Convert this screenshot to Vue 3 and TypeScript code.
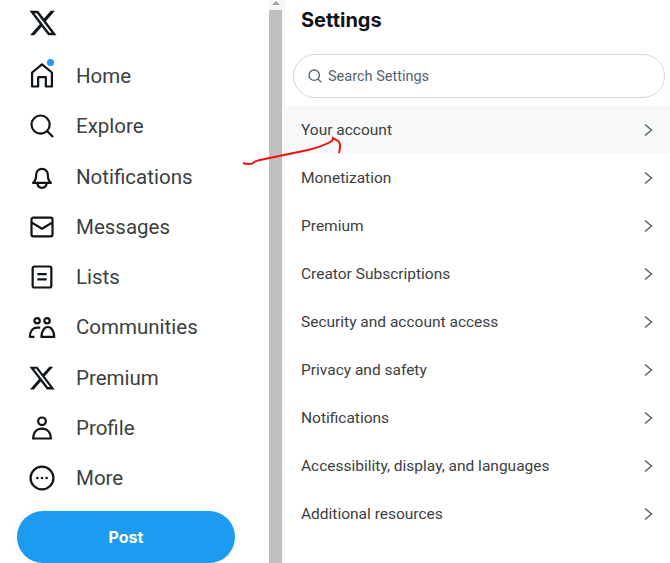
<script setup lang="ts">
interface NavItem {
  label: string
  icon: string
}

const navItems: NavItem[] = [
  { label: 'Home', icon: 'M12 2 3.500 9v12h5.200v-8h6.600v8h5.200V9z' },
  { label: 'Explore', icon: 'M10.800 3a7.800 7.800 0 1 0 0 15.600 7.800 7.800 0 0 0 0-15.600zM16.400 16.400 21.500 21.500' },
  { label: 'Notifications', icon: 'M4.300 17c1.800-1.300 2.700-3 2.700-7a5 5 0 0 1 10 0c0 4 .9 5.700 2.700 7zM8 17.500c.3 2.500 2 3.800 4 3.800s3.700-1.300 4-3.800' },
  { label: 'Messages', icon: 'M4.500 4h15A1.500 1.500 0 0 1 21 5.500v13a1.500 1.500 0 0 1-1.500 1.500h-15A1.500 1.500 0 0 1 3 18.500v-13A1.500 1.500 0 0 1 4.500 4zM3 8l9 5.500L21 8' },
  { label: 'Lists', icon: 'M5.500 3h13A1.500 1.500 0 0 1 20 4.500v15a1.500 1.500 0 0 1-1.500 1.500h-13A1.500 1.500 0 0 1 4 19.500v-15A1.500 1.500 0 0 1 5.500 3zM8 9.500h8M8 14h8' },
  { label: 'Communities', icon: 'M7.800 4.300a2.300 2.300 0 1 0 0 4.600 2.300 2.300 0 0 0 0-4.600zM16.300 4.300a2.300 2.300 0 1 0 0 4.600 2.300 2.300 0 0 0 0-4.600zM1.500 21c0-5 2.500-8.500 6.500-8.500h2.500M1.500 20.500h4M11.500 20.500c0-5 2.500-8.500 5.500-8.500s5.500 3.500 5.500 8.500z' },
  { label: 'Premium', icon: 'x' },
  { label: 'Profile', icon: 'M12 3a3.300 3.300 0 1 0 0 6.600A3.300 3.300 0 0 0 12 3zM4.500 21c0-5.500 3-8.500 7.500-8.500s7.500 3 7.500 8.500zM3.500 21h17' },
  { label: 'More', icon: 'more' },
]

const settings = [
  'Your account',
  'Monetization',
  'Premium',
  'Creator Subscriptions',
  'Security and account access',
  'Privacy and safety',
  'Notifications',
  'Accessibility, display, and languages',
  'Additional resources',
]

const xPath =
  'M18.244 2.25h3.308l-7.227 8.26 8.502 11.24H16.17l-5.214-6.817L4.99 21.75H1.68l7.73-8.835L1.254 2.25H8.08l4.713 6.231zm-1.161 17.52h1.833L7.084 4.126H5.117z'
</script>

<template>
  <div class="page">
    <aside class="sidebar">
      <svg class="logo" viewBox="0 0 24 24"><path :d="xPath" /></svg>
      <nav class="nav">
        <div v-for="item in navItems" :key="item.label" class="nav-item">
          <span class="nav-icon">
            <svg v-if="item.icon === 'x'" class="icon-fill" viewBox="0 0 24 24"><path :d="xPath" /></svg>
            <svg v-else-if="item.icon === 'more'" class="icon" viewBox="0 0 24 24">
              <circle cx="12" cy="12" r="9.800" />
              <circle class="dot" cx="8" cy="12" r="1.100" />
              <circle class="dot" cx="12" cy="12" r="1.100" />
              <circle class="dot" cx="16" cy="12" r="1.100" />
            </svg>
            <svg v-else class="icon" viewBox="0 0 24 24"><path :d="item.icon" /></svg>
            <span v-if="item.label === 'Home'" class="badge" />
          </span>
          <span class="nav-label">{{ item.label }}</span>
        </div>
      </nav>
      <button class="post">Post</button>
    </aside>

    <div class="scrollbar">
      <span class="arrow" />
      <div class="thumb" />
    </div>

    <main class="main">
      <h1>Settings</h1>
      <div class="search">
        <svg viewBox="0 0 24 24">
          <path d="M10.800 3a7.800 7.800 0 1 0 0 15.600 7.800 7.800 0 0 0 0-15.600zM16.400 16.400 21.500 21.500" />
        </svg>
        <span>Search Settings</span>
      </div>
      <ul class="rows">
        <li v-for="(row, i) in settings" :key="row" class="row" :class="{ active: i === 0 }">
          <span>{{ row }}</span>
          <svg viewBox="0 0 24 24"><path d="M8 4.600 16.700 12 8 19.400" /></svg>
        </li>
      </ul>
    </main>

    <svg class="scribble" viewBox="0 0 670 563">
      <path d="M243 163c3 1 7 2 10 0 2-2 4-2 7-3l48-10c9-2 17-5 24-9l1-3c2 2 5 2 6 4 2 3 1 7 0 11" />
    </svg>
  </div>
</template>

<style>
html, body { margin: 0; overflow: hidden; background: #fff; }
</style>

<style scoped>
.page {
  position: relative;
  display: flex;
  width: 670px;
  height: 563px;
  overflow: hidden;
  font-family: Roboto, "Liberation Sans", sans-serif;
  color: #0f1419;
}

.sidebar {
  width: 269px;
  flex: none;
  box-sizing: border-box;
  padding: 8px 0 0 17px;
}
.logo { display: block; width: 30px; height: 30px; margin-left: 11px; fill: #0f1419; }
.nav { margin-top: 13px; }
.nav-item { display: flex; align-items: center; height: 50.25px; }
.nav-icon { position: relative; display: block; width: 28px; height: 28px; margin-left: 11px; }
.icon, .icon-fill { display: block; width: 28px; height: 28px; }
.icon { fill: none; stroke: #0f1419; stroke-width: 1.900; stroke-linejoin: round; }
.icon-fill { fill: #0f1419; }
.dot { fill: #0f1419; stroke: none; }
.badge {
  position: absolute;
  top: -3px;
  right: 2px;
  width: 7px;
  height: 7px;
  border-radius: 50%;
  background: #1d9bf0;
}
.nav-label { margin-left: 20px; font-size: 20.5px; color: #3c4043; }
.post {
  display: block;
  width: 218px;
  height: 52px;
  margin-top: 8px;
  border: none;
  border-radius: 26px;
  background: #1d9bf0;
  color: #fff;
  font: 700 16px Inter, "Liberation Sans", sans-serif;
  box-shadow: 0 0 8px rgba(0, 0, 0, 0.06);
}

.scrollbar {
  position: relative;
  width: 16px;
  flex: none;
  background: #f7f7f7;
}
.thumb { width: 13px; height: 100%; margin-top: 10px; background: #bfbfbf; }
.arrow {
  position: absolute;
  top: 1px;
  left: 3px;
  border: 4px solid transparent;
  border-top: 0;
  border-bottom-color: #a3a3a3;
}

.main { flex: 1; min-width: 0; }
h1 {
  margin: 0;
  padding: 8px 16px 0;
  font-family: Inter, "Liberation Sans", sans-serif;
  font-size: 20px;
  line-height: 24px;
  font-weight: 700;
}
.search {
  display: flex;
  align-items: center;
  gap: 5px;
  height: 42px;
  margin: 22px 5px 8px 8px;
  padding-left: 13px;
  border: 1px solid #cfd9de;
  border-radius: 22px;
  font-size: 14.5px;
  color: #536471;
}
.search svg { width: 16px; height: 16px; fill: none; stroke: #536471; stroke-width: 2; }
.rows { margin: 0; padding: 0; list-style: none; }
.row {
  display: flex;
  align-items: center;
  justify-content: space-between;
  height: 48px;
  padding: 0 13px 0 16px;
  font-size: 15.5px;
  color: #3c4043;
}
.row.active { background: #f7f9f9; }
.row svg { width: 18px; height: 18px; fill: none; stroke: #536471; stroke-width: 2; }

.scribble {
  position: absolute;
  inset: 0;
  width: 670px;
  height: 563px;
  fill: none;
  stroke: #ee1111;
  stroke-width: 2;
  pointer-events: none;
}
</style>
